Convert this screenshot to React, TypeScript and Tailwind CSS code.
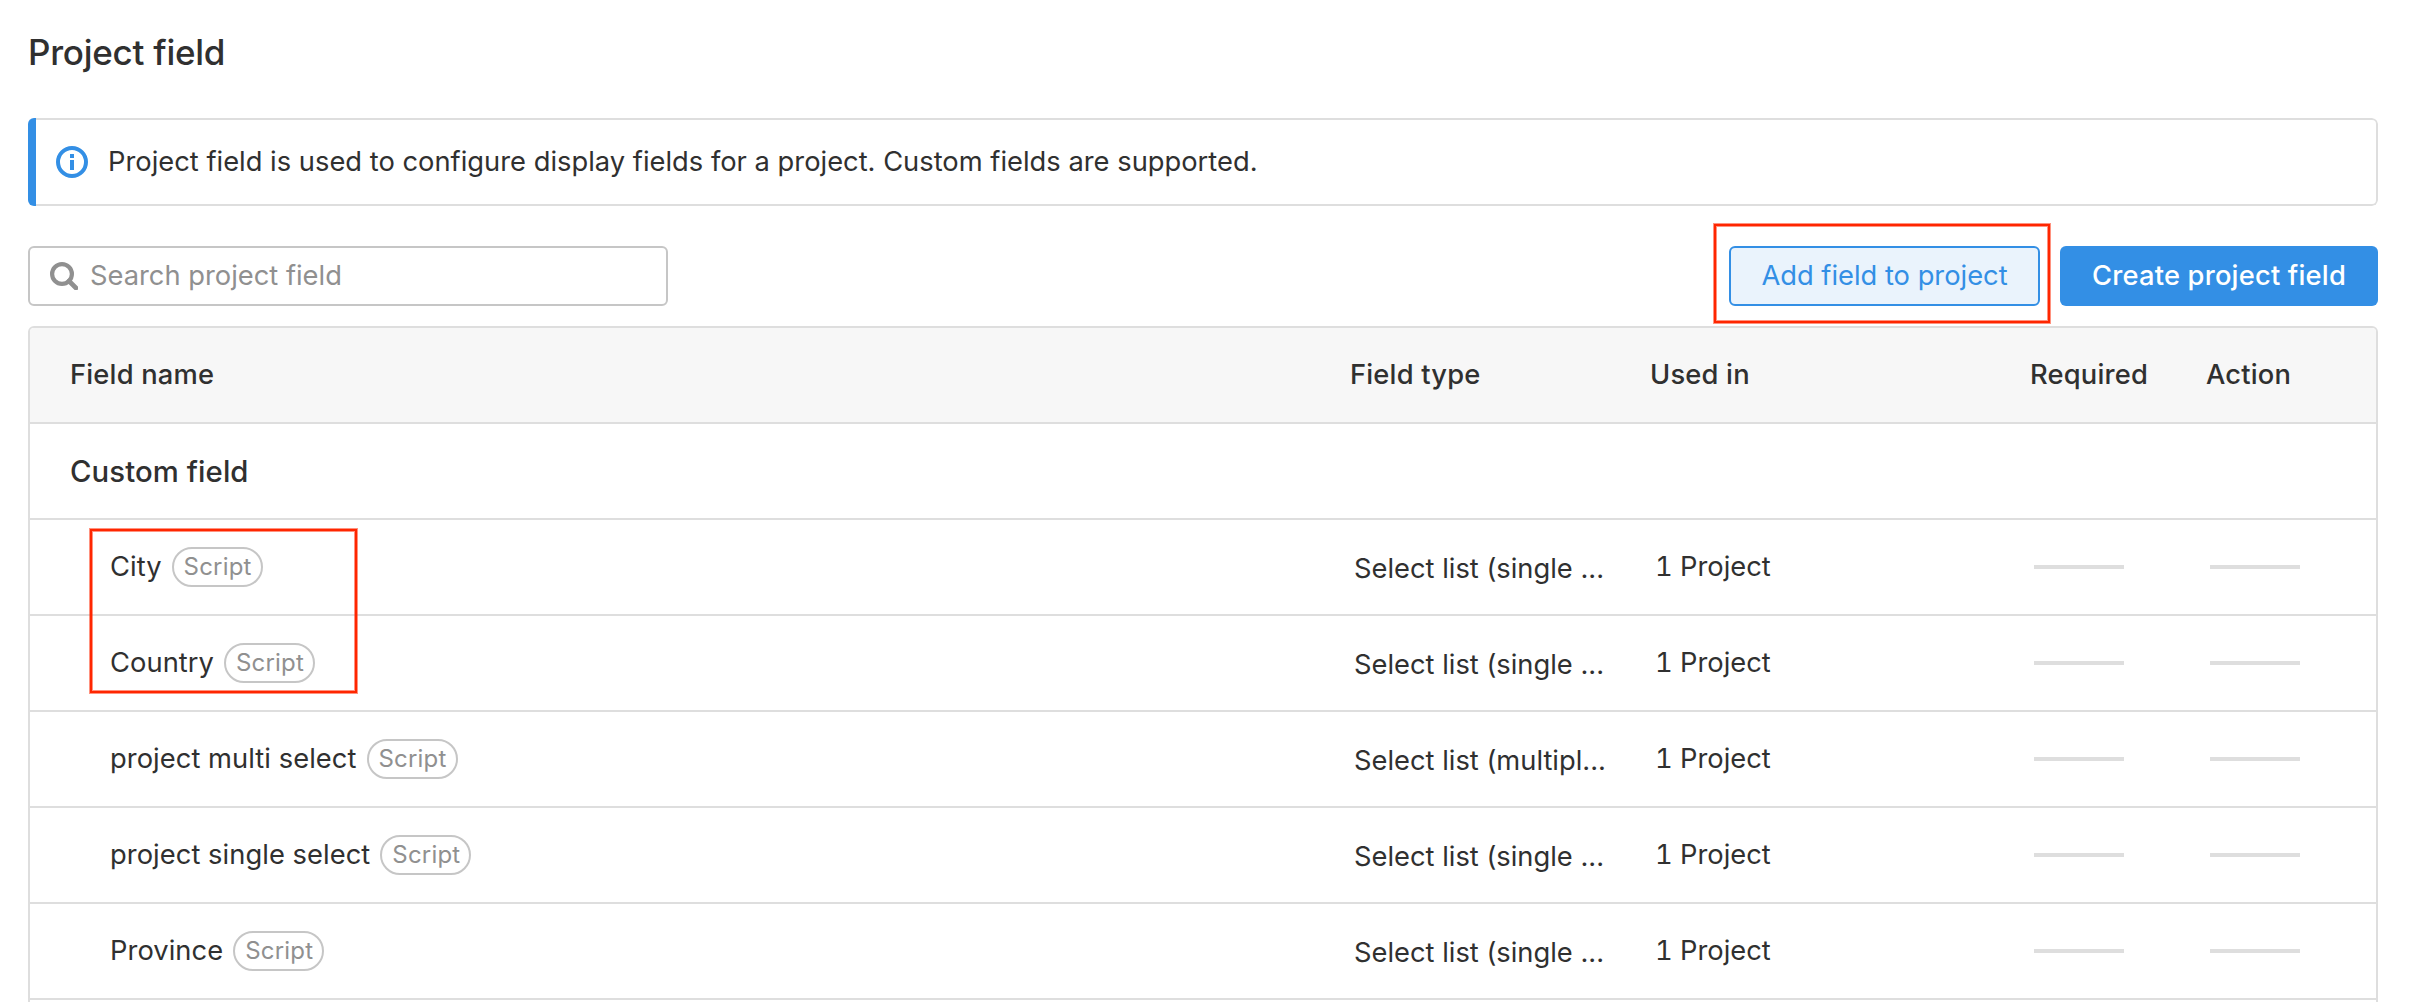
type Field = { name: string; type: string; usedIn: string };

const fields: Field[] = [
  { name: "City", type: "Select list (single ...", usedIn: "1 Project" },
  { name: "Country", type: "Select list (single ...", usedIn: "1 Project" },
  { name: "project multi select", type: "Select list (multipl...", usedIn: "1 Project" },
  { name: "project single select", type: "Select list (single ...", usedIn: "1 Project" },
  { name: "Province", type: "Select list (single ...", usedIn: "1 Project" },
];

function InfoIcon() {
  return (
    <svg width="32" height="32" viewBox="0 0 32 32" fill="none" className="shrink-0">
      <circle cx="16" cy="16" r="14" stroke="#338fe5" strokeWidth="4" />
      <path d="M14 8h4v4h-4zM14 14h4v10h-4z" fill="#338fe5" />
    </svg>
  );
}

function SearchIcon() {
  return (
    <svg width="28" height="28" viewBox="0 0 28 28" fill="none" className="shrink-0">
      <circle cx="12" cy="12" r="9.9" stroke="#909090" strokeWidth="4.2" />
      <path d="M19 19l7 7" stroke="#909090" strokeWidth="4.6" strokeLinecap="round" />
    </svg>
  );
}

// Red frame laid over the content that it points out
function Highlight({ className }: { className: string }) {
  return (
    <div
      className={`pointer-events-none absolute border-2 border-[#ff2600] shadow-[0_0_0_1px_rgba(255,38,0,0.5),inset_0_0_0_1px_rgba(255,38,0,0.5)] ${className}`}
    />
  );
}

function Dash() {
  return <div className="ml-1 h-1 w-[90px] bg-[#dedede]" />;
}

const grid = "grid h-24 grid-cols-[1320px_300px_380px_176px_1fr] items-center border-b-2 border-[#dedede]";

export default function App() {
  return (
    <div className="h-[1002px] overflow-hidden bg-white pr-[38px] pl-7 font-['Inter',sans-serif] text-[27.3px] leading-[40px] text-[#303030]">
      <h1 className="h-[118px] pt-8 text-[35px] font-medium tracking-[-0.25px]">Project field</h1>

      <div className="flex h-[88px] overflow-hidden rounded-md">
        <div className="w-2 bg-[#338fe5]" />
        <div className="flex flex-1 items-center rounded-r-md border-2 border-l-0 border-[#dedede] pl-5">
          <InfoIcon />
          <span className="ml-5 tracking-[0.01px]">
            Project field is used to configure display fields for a project. Custom fields are supported.
          </span>
        </div>
      </div>

      <div className="mt-10 flex h-[60px] items-center">
        <div className="flex h-[60px] w-[640px] items-center rounded-md border-2 border-[#c6c6c6] pl-5 text-[#909090]">
          <SearchIcon />
          <span className="ml-3">Search project field</span>
        </div>
        <div className="relative ml-auto">
          <button className="flex h-[60px] w-[311px] items-center justify-center rounded-md border-2 border-[#338fe5] bg-[#eaf3fc] text-[#338fe5]">
            Add field to project
          </button>
          <Highlight className="-top-[22px] -right-[10px] -bottom-[17px] -left-[15px]" />
        </div>
        <button className="ml-5 flex h-[60px] w-[318px] items-center justify-center rounded-md bg-[#338fe5] font-medium tracking-[0.2px] text-white">
          Create project field
        </button>
      </div>

      <div className="relative mt-5 h-[720px] overflow-hidden rounded-t-md border-2 border-[#dedede]">
        <div className={`${grid} bg-[#f7f7f7] font-medium tracking-[0.2px]`}>
          <span className="pl-10">Field name</span>
          <span>Field type</span>
          <span>Used in</span>
          <span>Required</span>
          <span>Action</span>
        </div>
        <div className="flex h-24 items-center border-b-2 border-[#dedede] pt-0.5 pl-10 text-[29.3px] font-medium tracking-[0.1px]">
          Custom field
        </div>
        {fields.map((f) => (
          <div key={f.name} className={grid}>
            <div className="flex items-center pl-20">
              <span className="tracking-[0.06px]">{f.name}</span>
              <span className="ml-[10px] flex h-10 w-[91px] items-center justify-center rounded-full border-2 border-[#c6c6c6] pl-px text-[24px] tracking-[0.2px] text-[#909090]">
                Script
              </span>
            </div>
            <span className="pt-1 pl-1">{f.type}</span>
            <span className="pl-[5px] tabular-nums">{f.usedIn}</span>
            <Dash />
            <Dash />
          </div>
        ))}
        <Highlight className="top-[201px] left-[60px] h-[164px] w-[267px]" />
      </div>
    </div>
  );
}
